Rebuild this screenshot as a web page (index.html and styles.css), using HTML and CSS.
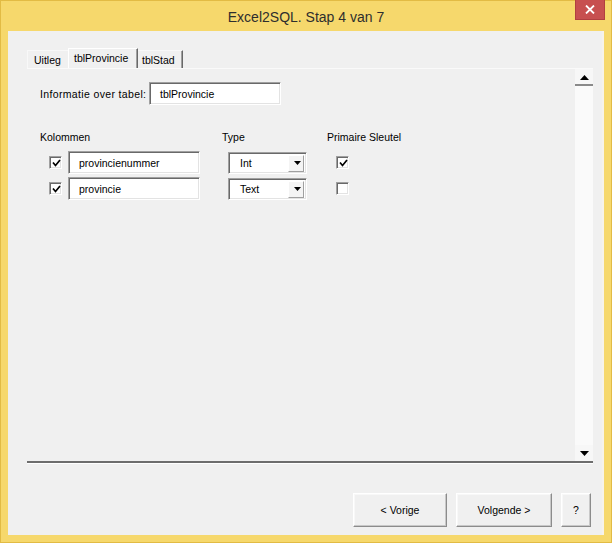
FILE: index.html
```html
<!DOCTYPE html>
<html>
<head>
<meta charset="utf-8">
<link rel="stylesheet" href="styles.css">
</head>
<body>
<div class="window">
  <div class="titlebar">
    <div class="title">Excel2SQL. Stap 4 van 7</div>
    <div class="close">
      <svg width="10" height="9" viewBox="0 0 10 9"><path d="M1 0.5 L9 8.5 M9 0.5 L1 8.5" stroke="#fff" stroke-width="1.8" fill="none"/></svg>
    </div>
  </div>
  <div class="client">
    <div class="tabs">
      <div class="tab tab-uitleg">Uitleg</div>
      <div class="tab tab-active">tblProvincie</div>
      <div class="tab tab-stad">tblStad</div>
    </div>
    <div class="frame">
      <div class="frame-content">
        <div class="info-row">
          <span class="label">Informatie over tabel:</span>
          <div class="textbox textbox-info">tblProvincie</div>
        </div>
        <div class="columns">
          <div class="head head-kol">Kolommen</div>
          <div class="head head-type">Type</div>
          <div class="head head-pk">Primaire Sleutel</div>

          <div class="cell"><span class="check">
            <svg width="9" height="8" viewBox="0 0 9 8"><path d="M1 3.5 L3.5 6.5 L8 1" stroke="#000" stroke-width="1.7" fill="none"/></svg>
          </span></div>
          <div class="cell"><div class="textbox textbox-col">provincienummer</div></div>
          <div class="cell"><div class="combo"><span class="combo-text">Int</span><span class="combo-btn"><svg width="7" height="4" viewBox="0 0 7 4"><path d="M0 0 H7 L3.5 4 Z" fill="#000"/></svg></span></div></div>
          <div class="cell"><span class="check check-pk">
            <svg width="9" height="8" viewBox="0 0 9 8"><path d="M1 3.5 L3.5 6.5 L8 1" stroke="#000" stroke-width="1.7" fill="none"/></svg>
          </span></div>

          <div class="cell"><span class="check">
            <svg width="9" height="8" viewBox="0 0 9 8"><path d="M1 3.5 L3.5 6.5 L8 1" stroke="#000" stroke-width="1.7" fill="none"/></svg>
          </span></div>
          <div class="cell"><div class="textbox textbox-col">provincie</div></div>
          <div class="cell"><div class="combo"><span class="combo-text">Text</span><span class="combo-btn"><svg width="7" height="4" viewBox="0 0 7 4"><path d="M0 0 H7 L3.5 4 Z" fill="#000"/></svg></span></div></div>
          <div class="cell"><span class="check check-pk check-off"></span></div>
        </div>
      </div>
      <div class="vscroll">
        <div class="sb-btn sb-up"><svg width="9" height="5" viewBox="0 0 9 5"><path d="M0 5 H9 L4.5 0 Z" fill="#000"/></svg></div>
        <div class="sb-track"></div>
        <div class="sb-btn sb-down"><svg width="9" height="5" viewBox="0 0 9 5"><path d="M0 0 H9 L4.5 5 Z" fill="#000"/></svg></div>
      </div>
    </div>
    <div class="buttons">
      <div class="btn btn-prev">&lt; Vorige</div>
      <div class="btn btn-next">Volgende &gt;</div>
      <div class="btn btn-help">?</div>
    </div>
  </div>
</div>
</body>
</html>
```
FILE: styles.css
```css
* { box-sizing: border-box; }
html, body { margin: 0; padding: 0; }
body {
  width: 612px;
  height: 543px;
  overflow: hidden;
  font-family: "Liberation Sans", Arial, sans-serif;
  font-size: 10.5px;
  color: #000;
}
.window {
  width: 612px;
  height: 543px;
  background: #f6d86c;
  border: 1px solid #e2bb44;
  padding: 0 7px 7px 7px;
  display: flex;
  flex-direction: column;
}
.titlebar {
  height: 30px;
  flex-shrink: 0;
  display: grid;
  grid-template-columns: 1fr auto 1fr;
  align-items: start;
}
.title {
  grid-column: 2;
  font-size: 14px;
  line-height: 30px;
  color: #2e2e2e;
  padding-top: 1px;
}
.close {
  grid-column: 3;
  justify-self: end;
  width: 30px;
  height: 20px;
  margin-top: -1px;
  margin-right: -1px;
  background: #c75050;
  border: 1px solid #b04040;
  border-top: none;
  display: flex;
  align-items: center;
  justify-content: center;
}
.client {
  flex: 1;
  background: #f0f0f0;
  border-right: 2px solid #f7f3ea;
  display: flex;
  flex-direction: column;
  padding: 17px 9px 8px 19px;
}
.tabs {
  height: 20px;
  display: flex;
  flex-shrink: 0;
}
.tab {
  flex-shrink: 0;
  height: 18px;
  margin-top: 2px;
  display: flex;
  align-items: center;
  border-top: 1px solid #f8f8f8;
  white-space: nowrap;
}
.tab-uitleg { width: 41px; padding-left: 6px; border-left: 1px solid #f8f8f8; }
.tab-active {
  width: 70px;
  height: 20px;
  margin-top: 0;
  padding-left: 5px;
  padding-bottom: 2px;
  border-top: 1px solid #fff;
  border-left: 1px solid #fff;
  border-right: 1px solid #696969;
  box-shadow: inset -1px 0 0 #a0a0a0;
}
.tab-stad {
  width: 45px;
  padding-left: 4px;
  border-right: 1px solid #696969;
  box-shadow: inset -1px 0 0 #a0a0a0;
}
.frame {
  height: 395px;
  flex-shrink: 0;
  display: flex;
  border-top: 1px solid #fafafa;
  border-bottom: 2px solid #6d6d6d;
  box-shadow: 0 1px 0 #fff;
}
.frame-content {
  flex: 1;
  padding: 13px 0 0 13px;
}
.info-row {
  display: flex;
  align-items: center;
}
.label { width: 107px; white-space: nowrap; letter-spacing: 0.35px; }
.textbox {
  background: #fff;
  border-top: 1px solid #a0a0a0;
  border-left: 1px solid #a0a0a0;
  border-right: 1px solid #fff;
  border-bottom: 1px solid #fff;
  box-shadow: inset 1px 1px 0 #696969, inset -1px -1px 0 #e3e3e3;
  height: 23px;
  display: flex;
  align-items: center;
  white-space: nowrap;
}
.textbox-info { margin-left: 2px; width: 132px; padding-left: 10px; }
.textbox-col { width: 132px; padding-left: 10px; }
.columns {
  margin-top: 26px;
  display: grid;
  grid-template-columns: 28px 154px 105px auto;
  grid-auto-rows: 23px;
  row-gap: 3px;
  grid-template-rows: 17px;
}
.head { line-height: 12px; align-self: start; }
.head-kol { grid-column: 1 / 3; }
.cell { display: flex; align-items: center; }
.check {
  width: 13px;
  height: 13px;
  margin-left: 9px;
  background: #fff;
  border-top: 1px solid #a0a0a0;
  border-left: 1px solid #a0a0a0;
  border-right: 1px solid #fff;
  border-bottom: 1px solid #fff;
  box-shadow: inset 1px 1px 0 #696969, inset -1px -1px 0 #e3e3e3;
  display: flex;
  align-items: center;
  justify-content: center;
  padding: 1px 0 0 1px;
}
.check-pk { margin-left: 9px; }
.combo {
  margin-left: 6px;
  width: 79px;
  height: 22px;
  background: #fff;
  border-top: 1px solid #a0a0a0;
  border-left: 1px solid #a0a0a0;
  border-right: 1px solid #fff;
  border-bottom: 1px solid #fff;
  box-shadow: inset 1px 1px 0 #696969, inset -1px -1px 0 #e3e3e3;
  display: flex;
  align-items: center;
  padding: 2px 2px 1px 0;
}
.combo-text { flex: 1; padding-left: 11px; }
.combo-btn {
  width: 16px;
  height: 17px;
  background: #f4f4f4;
  border-left: 1px solid #fff;
  border-top: 1px solid #fff;
  border-right: 1px solid #a0a0a0;
  border-bottom: 1px solid #a0a0a0;
  display: flex;
  align-items: center;
  justify-content: center;
  padding-left: 2px;
}
.vscroll {
  width: 18px;
  display: flex;
  flex-direction: column;
  background: #f8f8f8;
}
.sb-btn {
  height: 17px;
  display: flex;
  align-items: center;
  justify-content: center;
  background: #f7f7f7;
}
.sb-up { border-bottom: 2px solid #8a8a8a; padding-top: 2px; }
.sb-track { flex: 1; background: #fafafa; }
.sb-down { height: 16px; }
.buttons {
  margin-top: auto;
  margin-right: 2px;
  display: flex;
  justify-content: flex-end;
  gap: 9px;
}
.btn {
  height: 34px;
  display: flex;
  align-items: center;
  justify-content: center;
  background: #f0f0f0;
  border-top: 1px solid #fff;
  border-left: 1px solid #fff;
  border-right: 1px solid #8c8c8c;
  border-bottom: 1px solid #8c8c8c;
  box-shadow: inset -1px -1px 0 #c8c8c8, inset 1px 1px 0 #f8f8f8;
}
.btn-prev { width: 94px; }
.btn-next { width: 96px; }
.btn-help { width: 30px; }
```
